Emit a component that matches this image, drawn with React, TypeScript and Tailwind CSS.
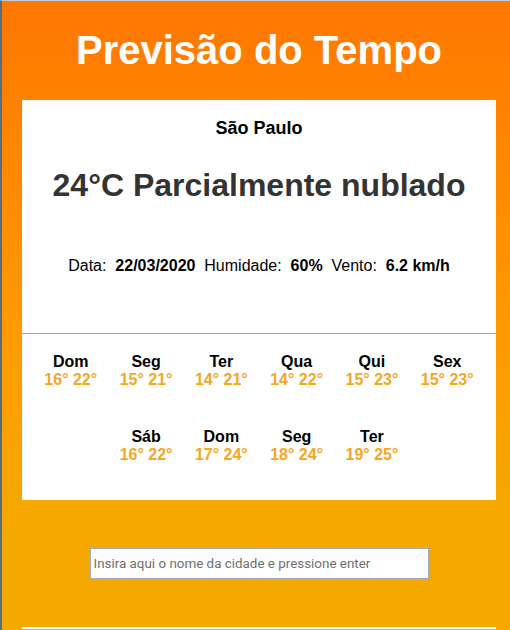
import React from "react";

const days1 = [
  { d: "Dom", t: "16° 22°" },
  { d: "Seg", t: "15° 21°" },
  { d: "Ter", t: "14° 21°" },
  { d: "Qua", t: "14° 22°" },
  { d: "Qui", t: "15° 23°" },
  { d: "Sex", t: "15° 23°" },
  { d: "Sáb", t: "16° 22°" },
  { d: "Dom", t: "17° 24°" },
  { d: "Seg", t: "18° 24°" },
  { d: "Ter", t: "19° 25°" },
];

export default function App() {
  return (
    <div
      className="h-[630px] overflow-hidden border-l-2 border-t border-l-[#5b6b7b] border-t-[#c9cdd2] bg-[linear-gradient(to_bottom,#ff7700_0%,#ff9a00_52%,#f5a800_82%,#f5a800_100%)] pl-[20px] pr-[14px]"
      style={{ fontFamily: '"Liberation Sans", Arial, sans-serif' }}
    >
      <h1 className="pt-[26px] pb-[27px] text-center text-[40px] font-bold leading-[46px] text-white">
        Previsão do Tempo
      </h1>
      <div className="h-[400px] bg-white">
        <div className="h-[233px]">
          <div className="pt-[18px] text-center text-[18px] font-bold leading-[21px] text-black">
            São Paulo
          </div>
          <div className="mt-[28px] text-center text-[32px] font-bold leading-[36px] text-[#333333]">
            24°C Parcialmente nublado
          </div>
          <div className="mt-[54px] text-center text-[16px] leading-[18px] text-black">
            Data:&nbsp; <b>22/03/2020</b>&nbsp; Humidade:&nbsp; <b>60%</b>&nbsp; Vento:&nbsp; <b>6.2 km/h</b>
          </div>
        </div>
        <div className="h-px bg-[#cfa456]"></div>
        <div className="flex flex-wrap justify-center px-[11px]">
          {days1.map((x, i) => (
            <div key={i} className="w-[75.3px] pt-[19px] pb-[20px] text-center text-[16px] font-bold leading-[18px]">
              <div className="text-black">{x.d}</div>
              <div className="text-[#f5a623]">{x.t}</div>
            </div>
          ))}
        </div>
      </div>
      <div className="flex justify-center pt-[48px]">
        <input
          type="text"
          placeholder="Insira aqui o nome da cidade e pressione enter"
          className="h-[31px] w-[339px] border border-[#a3abbb] bg-white pl-[3px] text-[13.4px] text-black outline-none placeholder:text-[#6f6f6f]"
          style={{ fontFamily: 'Roboto, "Noto Sans", sans-serif' }}
        />
      </div>
      <div className="mt-[48px] h-[40px] border-t-2 border-white"></div>
    </div>
  );
}
